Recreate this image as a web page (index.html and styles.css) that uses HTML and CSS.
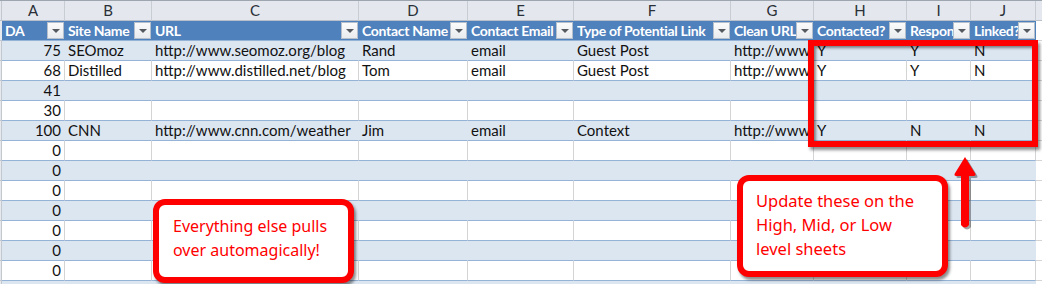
FILE: index.html
```html
<!DOCTYPE html>
<html>
<head>
<meta charset="utf-8">
<link rel="stylesheet" href="styles.css">
</head>
<body>
<div class="sheet">
  <div class="row letters">
    <div class="cell corner"></div>
    <div class="cell">A</div><div class="cell">B</div><div class="cell">C</div><div class="cell">D</div><div class="cell">E</div>
    <div class="cell">F</div><div class="cell">G</div><div class="cell">H</div><div class="cell">I</div><div class="cell">J</div><div class="cell"></div>
  </div>
  <div class="row head">
    <div class="cell corner"></div>
    <div class="cell"><span class="ht">DA</span><span class="dd"></span></div>
    <div class="cell"><span class="ht">Site Name</span><span class="dd"></span></div>
    <div class="cell"><span class="ht">URL</span><span class="dd"></span></div>
    <div class="cell"><span class="ht">Contact Name</span><span class="dd"></span></div>
    <div class="cell"><span class="ht">Contact Email</span><span class="dd"></span></div>
    <div class="cell"><span class="ht">Type of Potential Link</span><span class="dd"></span></div>
    <div class="cell"><span class="ht">Clean URL</span><span class="dd"></span></div>
    <div class="cell"><span class="ht">Contacted?</span><span class="dd"></span></div>
    <div class="cell"><span class="ht">Responded?</span><span class="dd"></span></div>
    <div class="cell"><span class="ht">Linked?</span><span class="dd"></span></div>
    <div class="cell plain"></div>
  </div>
  <div class="row band">
    <div class="cell corner"></div><div class="cell num">75</div><div class="cell">SEOmoz</div><div class="cell">http://www.seomoz.org/blog</div><div class="cell">Rand</div><div class="cell">email</div><div class="cell">Guest Post</div><div class="cell">http://www.seomoz.org/blog</div><div class="cell">Y</div><div class="cell">Y</div><div class="cell">N</div><div class="cell plain"></div>
  </div>
  <div class="row">
    <div class="cell corner"></div><div class="cell num">68</div><div class="cell">Distilled</div><div class="cell">http://www.distilled.net/blog</div><div class="cell">Tom</div><div class="cell">email</div><div class="cell">Guest Post</div><div class="cell">http://www.distilled.net/blog</div><div class="cell">Y</div><div class="cell">Y</div><div class="cell">N</div><div class="cell plain"></div>
  </div>
  <div class="row band">
    <div class="cell corner"></div><div class="cell num">41</div><div class="cell"></div><div class="cell"></div><div class="cell"></div><div class="cell"></div><div class="cell"></div><div class="cell"></div><div class="cell"></div><div class="cell"></div><div class="cell"></div><div class="cell plain"></div>
  </div>
  <div class="row">
    <div class="cell corner"></div><div class="cell num">30</div><div class="cell"></div><div class="cell"></div><div class="cell"></div><div class="cell"></div><div class="cell"></div><div class="cell"></div><div class="cell"></div><div class="cell"></div><div class="cell"></div><div class="cell plain"></div>
  </div>
  <div class="row band">
    <div class="cell corner"></div><div class="cell num">100</div><div class="cell">CNN</div><div class="cell">http://www.cnn.com/weather</div><div class="cell">Jim</div><div class="cell">email</div><div class="cell">Context</div><div class="cell">http://www.cnn.com/weather</div><div class="cell">Y</div><div class="cell">N</div><div class="cell">N</div><div class="cell plain"></div>
  </div>
  <div class="row">
    <div class="cell corner"></div><div class="cell num">0</div><div class="cell"></div><div class="cell"></div><div class="cell"></div><div class="cell"></div><div class="cell"></div><div class="cell"></div><div class="cell"></div><div class="cell"></div><div class="cell"></div><div class="cell plain"></div>
  </div>
  <div class="row band">
    <div class="cell corner"></div><div class="cell num">0</div><div class="cell"></div><div class="cell"></div><div class="cell"></div><div class="cell"></div><div class="cell"></div><div class="cell"></div><div class="cell"></div><div class="cell"></div><div class="cell"></div><div class="cell plain"></div>
  </div>
  <div class="row">
    <div class="cell corner"></div><div class="cell num">0</div><div class="cell"></div><div class="cell"></div><div class="cell"></div><div class="cell"></div><div class="cell"></div><div class="cell"></div><div class="cell"></div><div class="cell"></div><div class="cell"></div><div class="cell plain"></div>
  </div>
  <div class="row band">
    <div class="cell corner"></div><div class="cell num">0</div><div class="cell"></div><div class="cell"></div><div class="cell"></div><div class="cell"></div><div class="cell"></div><div class="cell"></div><div class="cell"></div><div class="cell"></div><div class="cell"></div><div class="cell plain"></div>
  </div>
  <div class="row">
    <div class="cell corner"></div><div class="cell num">0</div><div class="cell"></div><div class="cell"></div><div class="cell"></div><div class="cell"></div><div class="cell"></div><div class="cell"></div><div class="cell"></div><div class="cell"></div><div class="cell"></div><div class="cell plain"></div>
  </div>
  <div class="row band">
    <div class="cell corner"></div><div class="cell num">0</div><div class="cell"></div><div class="cell"></div><div class="cell"></div><div class="cell"></div><div class="cell"></div><div class="cell"></div><div class="cell"></div><div class="cell"></div><div class="cell"></div><div class="cell plain"></div>
  </div>
  <div class="row">
    <div class="cell corner"></div><div class="cell num">0</div><div class="cell"></div><div class="cell"></div><div class="cell"></div><div class="cell"></div><div class="cell"></div><div class="cell"></div><div class="cell"></div><div class="cell"></div><div class="cell"></div><div class="cell plain"></div>
  </div>
  <div class="row band">
    <div class="cell corner"></div><div class="cell num"></div><div class="cell"></div><div class="cell"></div><div class="cell"></div><div class="cell"></div><div class="cell"></div><div class="cell"></div><div class="cell"></div><div class="cell"></div><div class="cell"></div><div class="cell plain"></div>
  </div>

  <div class="redbox"></div>
  <div class="callout callout-left">Everything else pulls over automagically!</div>
  <div class="callout callout-right">Update these on the High, Mid, or Low level sheets</div>
  <svg class="arrow" width="40" height="90" viewBox="0 0 40 90">
    <g transform="translate(2,2)" fill="rgba(0,0,0,0.35)">
      <path d="M15 7 L4.5 24 Q4 26 6 26 L11 26 L11 75 Q15 80 19 75 L19 26 L24 26 Q26 26 25.5 24 Z"/>
    </g>
    <path fill="#ff0000" d="M15 7 L4.5 24 Q4 26 6 26 L11 26 L11 75 Q15 80 19 75 L19 26 L24 26 Q26 26 25.5 24 Z"/>
  </svg>
</div>
</body>
</html>
```

FILE: styles.css
```css
html, body {
  margin: 0;
  padding: 0;
  background: #ffffff;
  overflow: hidden;
}

.sheet {
  position: relative;
  width: 1042px;
  height: 284px;
  overflow: hidden;
  font-family: "Lato", "Liberation Sans", sans-serif;
  font-size: 15px;
  color: #111111;
}

.row {
  display: grid;
  grid-template-columns: 2px 63px 87px 207px 109px 106px 157px 83px 93px 64px 65px 6px;
  height: 20px;
  background: #ffffff;
}

.cell {
  box-sizing: border-box;
  height: 20px;
  border-right: 1px solid #d4d4d4;
  border-bottom: 1px solid #95b3d7;
  padding: 0 3px;
  line-height: 19px;
  white-space: nowrap;
  overflow: hidden;
}

.cell.num {
  text-align: right;
}

.cell.plain {
  border-bottom: 1px solid #d4d4d4;
  border-right: none;
  background: #ffffff;
}

.cell.corner {
  padding: 0;
  background: #e6e9ee;
  border-right: 1px solid #c3c8cf;
  border-bottom: 1px solid #c3c8cf;
}

.band .cell {
  background: #dce6f1;
  border-right-color: #dce6f1;
}

.band .cell.corner {
  background: #e6e9ee;
  border-right-color: #c3c8cf;
}

.band .cell.plain {
  background: #ffffff;
}

.letters {
  height: 21px;
  border-top: 1px solid #9da5af;
  box-sizing: border-box;
}

.letters .cell {
  height: 20px;
  background: #e4e8ee;
  border-right: 1px solid #c8cdd4;
  border-bottom: 1px solid #b9c0c9;
  text-align: center;
  color: #2a2f38;
  line-height: 19px;
}

.letters .cell.corner {
  border-right: 1px solid #c3c8cf;
}

.head .cell {
  background: #4f81bd;
  border-right: none;
  border-bottom: 1px solid #95b3d7;
  color: #ffffff;
  font-weight: bold;
  font-size: 14px;
  letter-spacing: -0.3px;
  display: flex;
  align-items: center;
  padding: 0 1px 0 3px;
}

.head .cell.corner {
  background: #e6e9ee;
  border-right: 1px solid #c3c8cf;
  border-bottom: 1px solid #c3c8cf;
}

.head .cell.plain {
  background: #ffffff;
  border-bottom: 1px solid #d4d4d4;
}

.ht {
  flex: 1 1 auto;
  min-width: 0;
  overflow: hidden;
  white-space: nowrap;
}

.dd {
  flex: 0 0 auto;
  box-sizing: border-box;
  width: 17px;
  height: 17px;
  border: 1px solid #b6bfcc;
  background: linear-gradient(#fbfbfb, #e9ebee);
  position: relative;
}

.dd::after {
  content: "";
  position: absolute;
  left: 4px;
  top: 6px;
  border-left: 4px solid transparent;
  border-right: 4px solid transparent;
  border-top: 4px solid #555a60;
}

.redbox {
  position: absolute;
  left: 808px;
  top: 40px;
  width: 230px;
  height: 107px;
  box-sizing: border-box;
  border: 6px solid #ff0000;
  box-shadow: 2px 3px 3px rgba(0, 0, 0, 0.45), inset 2px 2px 3px rgba(0, 0, 0, 0.45);
}

.callout {
  position: absolute;
  box-sizing: border-box;
  background: #ffffff;
  border: 6px solid #ff0000;
  border-radius: 12px;
  box-shadow: 2px 3px 3px rgba(0, 0, 0, 0.45);
  color: #ff0000;
  font-family: "Noto Sans", "Open Sans", sans-serif;
  font-size: 16px;
  line-height: 24px;
}

.callout-left {
  left: 153px;
  top: 199px;
  width: 201px;
  height: 84px;
  padding: 9px 8px 0 14px;
}

.callout-right {
  left: 737px;
  top: 175px;
  width: 211px;
  height: 102px;
  padding: 8px 24px 0 13px;
  font-size: 16.5px;
}

.arrow {
  position: absolute;
  left: 950px;
  top: 150px;
}
```
